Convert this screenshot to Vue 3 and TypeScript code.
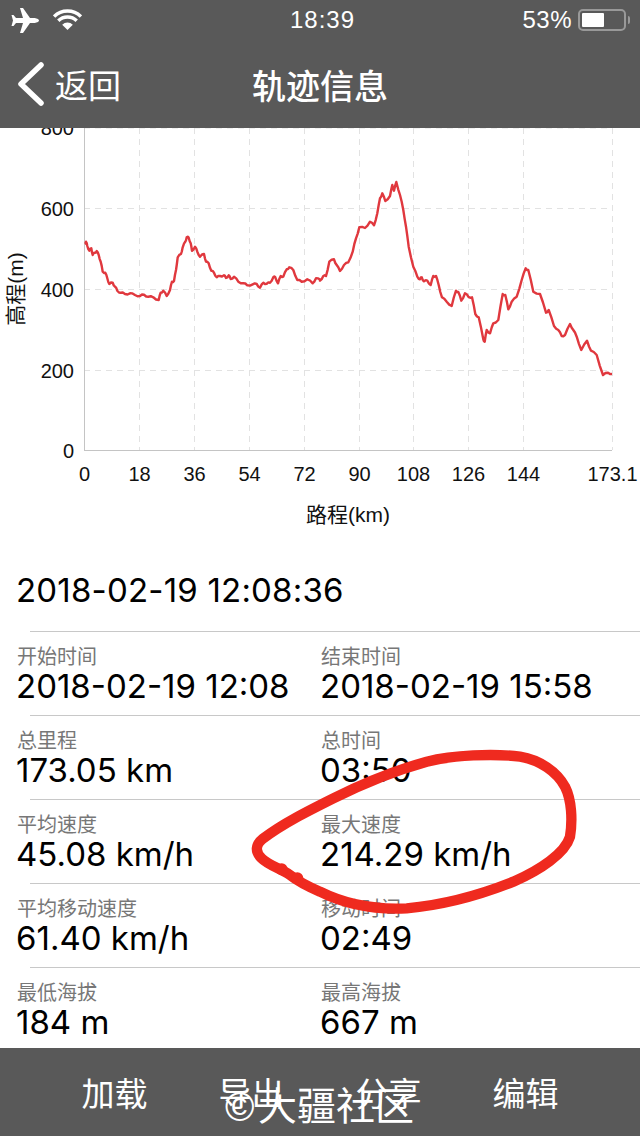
<template>
  <div class="page">
    <header class="top">
      <div class="status">
        <div class="status-left">
          <svg class="plane" viewBox="0 0 28 25"><path d="M28 12.5C28 11 25 10 23 10H19L12 0H9L12 10H5L2.5 7H.5L2 12.5.5 18h2L5 15h7L9 25h3l7-10h4c2 0 5-1 5-2.500Z" fill="#fff" /></svg>
          <svg class="wifi" viewBox="0 0 29 22">
            <path d="M1.1 7.600A19 19 0 0 1 27.900 7.600" />
            <path d="M5.300 11.800A13 13 0 0 1 23.700 11.800" />
            <path class="wedge" d="M14.500 21 9.200 15.700A7.500 7.500 0 0 1 19.800 15.700Z" />
          </svg>
        </div>
        <div class="clock">18:39</div>
        <div class="status-right">
          <span class="pct">53%</span>
          <span class="battery"><i :style="{ width: '22px' }"></i></span>
          <span class="nub"></span>
        </div>
      </div>
      <div class="nav">
        <div class="back">
          <svg class="chevron" viewBox="0 0 26 44"><path d="M23 3 3 22 23 41" /></svg>
          <span>返回</span>
        </div>
        <div class="title">轨迹信息</div>
      </div>
    </header>

    <main class="content">
      <svg class="chart" viewBox="0 128 640 412">
        <g class="grid">
          <line v-for="x in xTicks" :key="x.label" :x1="x.pos" y1="128" :x2="x.pos" y2="450" />
          <line v-for="y in yTicks.slice(1)" :key="y.label" x1="84" :y1="y.pos" x2="612" :y2="y.pos" />
        </g>
        <line class="axis" x1="84.500" y1="128" x2="84.500" y2="450.500" />
        <line class="axis" x1="84" y1="450.500" x2="612" y2="450.500" />
        <polyline class="track" :points="trackPoints" />
        <text v-for="y in yTicks" :key="y.label" class="tick" x="74" :y="y.pos + 7" text-anchor="end">{{ y.label }}</text>
        <text v-for="x in xTicks" :key="x.label" class="tick" :x="x.pos" y="481" text-anchor="middle">{{ x.label }}</text>
        <text class="axis-name" x="348" y="522" text-anchor="middle">路程(km)</text>
        <text class="axis-name" transform="translate(23 289) rotate(-90)" text-anchor="middle">高程(m)</text>
      </svg>

      <div class="when">2018-02-19 12:08:36</div>
      <template v-for="row in rows" :key="row[0].label">
        <div class="rule"></div>
        <div class="row">
          <div v-for="cell in row" :key="cell.label" class="cell">
            <div class="label">{{ cell.label }}</div>
            <div class="value">{{ cell.value }}</div>
          </div>
        </div>
      </template>
    </main>

    <footer class="tabs">
      <span v-for="t in tabs" :key="t">{{ t }}</span>
    </footer>

    <!-- 手画的红圈，盖在内容上面 -->
    <svg class="scribble" viewBox="0 0 1200 600">
      <path d="M150 405C120 385 85 375 65 355 45 335 45 315 70 295 130 250 200 215 280 175 370 130 470 90 560 65 640 45 760 40 840 50 900 60 950 95 975 140 995 180 998 240 990 290 975 340 900 390 820 425 720 465 610 495 500 505 400 510 310 490 240 455 205 440 175 425 150 405Z" />
      <circle cx="125" cy="388" r="18" />
      <circle cx="172" cy="415" r="18" />
    </svg>

    <div class="watermark"><span class="copy">©</span>大疆社区</div>
  </div>
</template>

<script setup lang="ts">
type Cell = { label: string; value: string }

const xTicks = [
  { label: '0', pos: 84.5 },
  { label: '18', pos: 139.5 },
  { label: '36', pos: 194.5 },
  { label: '54', pos: 249.5 },
  { label: '72', pos: 304.5 },
  { label: '90', pos: 359.5 },
  { label: '108', pos: 413.5 },
  { label: '126', pos: 468.5 },
  { label: '144', pos: 523.5 },
  { label: '173.1', pos: 612.5 }
]

const yTicks = [
  { label: '0', pos: 450.5 },
  { label: '200', pos: 370.5 },
  { label: '400', pos: 289.5 },
  { label: '600', pos: 208.5 },
  { label: '800', pos: 128 }
]

// 轨迹点：按截图描出来的，两段的原点不同
const partA = [
  254, 372, 258, 365, 262, 378, 268, 392, 274, 385, 278, 405, 285, 398, 290, 393, 296, 405, 302, 425, 308, 455,
  316, 458, 322, 475, 328, 492, 338, 488, 345, 500, 352, 512, 362, 518, 375, 522, 390, 520, 405, 525, 420, 528,
  432, 524, 445, 530, 460, 532, 476, 540, 482, 518, 490, 512, 500, 528, 510, 510, 516, 485, 522, 483, 528, 450,
  533, 412, 543, 402, 548, 382, 556, 365, 560, 352, 566, 353, 572, 370, 576, 392, 585, 380, 592, 395, 600, 410,
  612, 402, 618, 425, 626, 430, 634, 452, 642, 458, 650, 472, 660, 468, 672, 466, 678, 474, 686, 466, 692, 477,
  702, 470, 715, 485, 730, 490, 742, 496, 758, 493, 770, 492, 780, 503, 790, 488, 800, 491, 810, 488, 820, 472,
  826, 472, 834, 490, 842, 468, 850, 470, 860, 448, 868, 442, 880, 450, 892, 480, 905, 485, 922, 478, 938, 490,
  948, 475, 962, 480
]
const partB = [
  0, 482, 10, 468, 18, 468, 28, 425, 42, 418, 50, 435, 60, 453, 72, 435, 85, 427, 98, 395, 108, 355, 118, 322,
  135, 324, 150, 305, 162, 316, 172, 280, 180, 235, 187, 220, 196, 243, 210, 228, 217, 195, 222, 212, 229, 186,
  240, 225, 250, 270, 258, 320, 266, 380, 280, 440, 292, 470, 300, 478, 305, 472, 312, 484, 322, 482, 332, 495,
  340, 468, 348, 468, 356, 495, 366, 532, 380, 545, 395, 558, 408, 512, 415, 516, 424, 542, 435, 520, 445, 530,
  456, 532, 466, 582, 476, 592, 490, 658, 494, 665, 500, 630, 510, 640, 520, 610, 535, 600, 548, 522, 556, 525,
  565, 568, 575, 545, 590, 530, 605, 480, 617, 445, 625, 450, 640, 515, 660, 522, 678, 578, 686, 570, 702, 618,
  715, 630, 725, 648, 735, 645, 750, 612, 760, 630, 770, 650, 784, 690, 801, 662, 813, 692, 830, 705, 849, 765,
  864, 758, 876, 762
]

// 原始数据很碎，相邻点之间再插一个带小抖动的点
const toPoints = (raw: number[], ox: number) => {
  const out: string[] = []
  for (let i = 0; i < raw.length; i += 2) {
    const x = ox + raw[i] / 3
    const y = 120 + raw[i + 1] / 3
    out.push(`${x.toFixed(1)},${y.toFixed(1)}`)
    if (i + 3 < raw.length) {
      const mx = ox + (raw[i] + raw[i + 2]) / 6
      const my = 120 + (raw[i + 1] + raw[i + 3]) / 6 + (i % 4 === 0 ? 0.8 : -0.8)
      out.push(`${mx.toFixed(1)},${my.toFixed(1)}`)
    }
  }
  return out.join(' ')
}

const trackPoints = `${toPoints(partA, 0)} ${toPoints(partB, 320)}`

const rows: Cell[][] = [
  [
    { label: '开始时间', value: '2018-02-19 12:08' },
    { label: '结束时间', value: '2018-02-19 15:58' }
  ],
  [
    { label: '总里程', value: '173.05 km' },
    { label: '总时间', value: '03:50' }
  ],
  [
    { label: '平均速度', value: '45.08 km/h' },
    { label: '最大速度', value: '214.29 km/h' }
  ],
  [
    { label: '平均移动速度', value: '61.40 km/h' },
    { label: '移动时间', value: '02:49' }
  ],
  [
    { label: '最低海拔', value: '184 m' },
    { label: '最高海拔', value: '667 m' }
  ]
]

const tabs = ['加载', '导出', '分享', '编辑']
</script>

<style scoped>
.page {
  position: relative;
  width: 640px;
  height: 1136px;
  display: flex;
  flex-direction: column;
  overflow: hidden;
  background: #fff;
  font-family: "Liberation Sans", "Noto Sans CJK SC", sans-serif;
  color: #000;
}

/* 顶部 */
.top {
  flex: none;
  background: #595959;
  color: #fff;
}
.status {
  height: 40px;
  display: grid;
  grid-template-columns: 1fr auto 1fr;
  align-items: center;
  padding: 0 10px 0 11px;
}
.status-left {
  display: flex;
  align-items: center;
  gap: 14px;
}
.plane {
  width: 28px;
  height: 25px;
}
.wifi {
  width: 29px;
  height: 22px;
}
.wifi path {
  fill: none;
  stroke: #fff;
  stroke-width: 3.4;
}
.wifi .wedge {
  fill: #fff;
  stroke: none;
}
.clock {
  font-size: 24px;
  letter-spacing: 1px;
  margin-left: 4px;
}
.status-right {
  display: flex;
  align-items: center;
  justify-content: flex-end;
}
.pct {
  font-size: 24px;
  margin-right: 6px;
  letter-spacing: .5px;
}
.battery {
  width: 48px;
  height: 22px;
  box-sizing: border-box;
  border: 2px solid #999;
  border-radius: 5px;
  padding: 2px;
  display: flex;
}
.battery i {
  background: #fff;
  border-radius: 1px;
}
.nub {
  width: 2px;
  height: 8px;
  margin-left: 2px;
  background: #999;
  border-radius: 0 2px 2px 0;
}
.nav {
  height: 88px;
  display: grid;
  grid-template-columns: 1fr auto 1fr;
  align-items: center;
}
.back {
  display: flex;
  align-items: center;
  gap: 11px;
  padding-left: 18px;
  font-size: 33px;
}
.chevron {
  width: 26px;
  height: 44px;
}
.chevron path {
  fill: none;
  stroke: #fff;
  stroke-width: 5.500;
  stroke-linecap: round;
  stroke-linejoin: round;
}
.title {
  font-size: 34px;
  font-weight: 500;
}

/* 图表 */
.content {
  flex: 1;
  overflow: hidden;
}
.chart {
  display: block;
  width: 640px;
  height: 412px;
}
.grid line {
  stroke: #e2e2e2;
  stroke-width: 1;
  stroke-dasharray: 6 5;
}
.axis {
  stroke: #c4c4c4;
  stroke-width: 1;
}
.track {
  fill: none;
  stroke: #e0383e;
  stroke-width: 2.400;
  stroke-linejoin: round;
}
.tick {
  font-size: 20px;
  fill: #111;
}
.axis-name {
  font-size: 21px;
  fill: #111;
}

/* 明细 */
.when {
  height: 91px;
  padding: 29px 0 0 16px;
  box-sizing: border-box;
  font-family: Inter, "Liberation Sans", sans-serif;
  font-size: 33px;
  line-height: 42px;
  letter-spacing: .2px;
}
.rule {
  height: 1px;
  margin-left: 30px;
  background: #c8c8c8;
}
.row {
  height: 83px;
  display: grid;
  grid-template-columns: 304px 1fr;
  padding: 13px 0 0 17px;
  box-sizing: border-box;
}
.label {
  font-size: 20px;
  line-height: 24px;
  color: #777;
}
.value {
  margin-left: -1px;
  font-family: Inter, "Liberation Sans", sans-serif;
  font-size: 33px;
  line-height: 34px;
}

/* 底栏 */
.tabs {
  flex: none;
  height: 88px;
  padding: 0 46px;
  display: grid;
  grid-template-columns: repeat(4, 1fr);
  align-items: center;
  justify-items: center;
  background: #595959;
  color: #fff;
  font-size: 33px;
}

.scribble {
  position: absolute;
  left: 240px;
  top: 740px;
  width: 400px;
  height: 200px;
}
.scribble path {
  fill: none;
  stroke: #ef2a1f;
  stroke-width: 31;
  stroke-linejoin: round;
}
.scribble circle {
  fill: #ef2a1f;
}
.watermark {
  position: absolute;
  left: 225px;
  top: 1083px;
  font-size: 39px;
  line-height: 48px;
  color: #fff;
  display: flex;
  align-items: center;
}
.copy {
  width: 33px;
  font-size: 40px;
}
</style>
